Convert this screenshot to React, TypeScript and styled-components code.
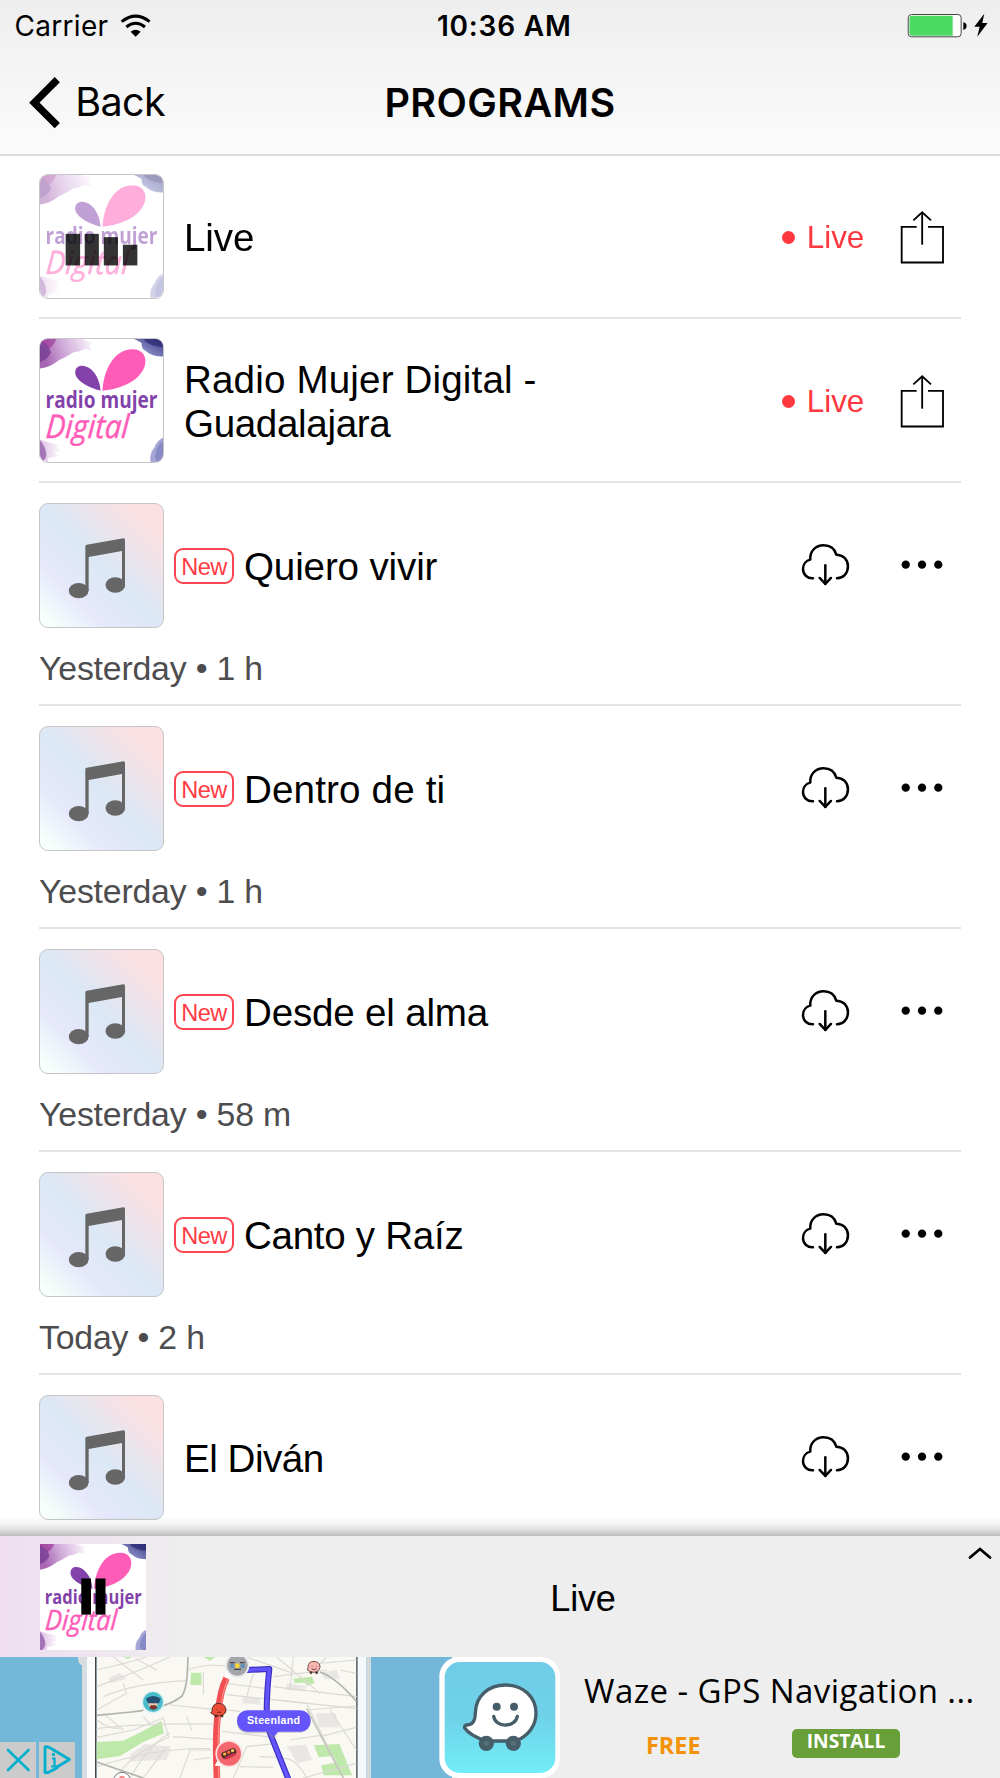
import React from "react";
import styled, { createGlobalStyle } from "styled-components";

const GlobalStyle = createGlobalStyle`
  * { box-sizing: border-box; }
  body { margin: 0; background: #fff; color: #000; }
  svg { display: block; flex: none; }
`;

const helvetica = `"Liberation Sans", Arial, sans-serif`;
const system = `Inter, "Liberation Sans", sans-serif`;
const openSans = `"Open Sans", "Noto Sans", sans-serif`;

const Screen = styled.div`
  width: 1000px;
  height: 1778px;
  display: flex;
  flex-direction: column;
  overflow: hidden;
  background: #fff;
  font-family: ${helvetica};
`;

/* ---------- header ---------- */

const Header = styled.header`
  height: 156px;
  flex: none;
  border-bottom: 2px solid #dadada;
  background: linear-gradient(#eeeeee, #fafafa 90%);
  font-family: ${system};
`;

const StatusBar = styled.div`
  height: 51px;
  display: grid;
  grid-template-columns: 1fr auto 1fr;
  align-items: center;
  padding: 0 11px 0 14.5px;
`;

const Carrier = styled.div`
  display: flex;
  align-items: center;
  gap: 12px;
  font-size: 28px;
  letter-spacing: 0.3px;
`;

const Clock = styled.div`
  font-size: 28px;
  font-weight: 600;
  letter-spacing: 0.8px;
  padding-left: 5px;
`;

const Power = styled.div`
  justify-self: end;
`;

const NavBar = styled.div`
  height: 103px;
  display: grid;
  grid-template-columns: 1fr auto 1fr;
  align-items: center;
  padding: 0 28px;
`;

const BackButton = styled.div`
  display: flex;
  align-items: center;
  gap: 12px;
  font-size: 39.5px;
  letter-spacing: -0.6px;
`;

const NavTitle = styled.h1`
  margin: 0;
  font-size: 39.5px;
  font-weight: 600;
  letter-spacing: 0.4px;
`;

/* ---------- list ---------- */

const List = styled.main`
  flex: 1;
  min-height: 0;
  overflow: hidden;
  padding: 0 39px;
`;

const Item = styled.article<{ $height: number; $top: number }>`
  height: ${(p) => p.$height}px;
  padding-top: ${(p) => p.$top}px;
  border-bottom: 2px solid #e3e3e3;
`;

const ItemMain = styled.div`
  height: 125px;
  display: flex;
  align-items: center;
  padding-right: 16px;
`;

const Thumb = styled.div<{ $music?: boolean }>`
  width: 125px;
  height: 125px;
  flex: none;
  border: 1px solid #c6c6c8;
  border-radius: 9px;
  overflow: hidden;
  background: ${(p) =>
    p.$music
      ? "linear-gradient(45deg, #f6fffa 6%, #e6e8fb 27%, #dbe8f5 50%, #fde0e1 88%)"
      : "#fff"};
`;

const Badge = styled.span`
  width: 60px;
  height: 36px;
  flex: none;
  margin: 1px 0 0 10px;
  border: 2px solid #ff4650;
  border-radius: 9px;
  color: #ff3b45;
  font-size: 23.6px;
  line-height: 34px;
  letter-spacing: -0.5px;
  text-align: center;
`;

const Title = styled.h2<{ $afterBadge?: boolean }>`
  flex: 1;
  margin: 0;
  padding: 3px 0 0 ${(p) => (p.$afterBadge ? 10 : 20)}px;
  font-size: 38.6px;
  font-weight: 400;
  line-height: 44.5px;
`;

const TitleLine = styled.span<{ $tracking: number }>`
  display: block;
  letter-spacing: ${(p) => p.$tracking}px;
  white-space: nowrap;
`;

const LiveTag = styled.span`
  display: flex;
  align-items: center;
  gap: 12px;
  margin-right: 36px;
  padding-top: 2px;
  color: #ff3840;
  font-size: 31.4px;
  line-height: 36px;
`;

const LiveDot = styled.i`
  width: 13px;
  height: 13px;
  border-radius: 50%;
  background: #ff3840;
`;

const Actions = styled.div`
  display: flex;
  align-items: center;
  gap: 50px;
  padding: 0 1px 2px 0;
`;

const Meta = styled.p`
  margin: 21px 0 0;
  color: #4d4d4f;
  font-size: 33.8px;
  line-height: 38px;
  letter-spacing: -0.18px;
`;

/* ---------- player ---------- */

const Player = styled.section`
  position: relative;
  height: 121px;
  flex: none;
  display: flex;
  justify-content: space-between;
  padding: 7.5px 8px 0 39.500px;
  background: linear-gradient(90deg, #efdff0 0, #efe2f0 60px, #eeeeee 185px);

  &::before {
    content: "";
    position: absolute;
    left: 0;
    right: 0;
    top: -20px;
    height: 20px;
    background: linear-gradient(
      rgba(0, 0, 0, 0),
      rgba(0, 0, 0, 0.04) 35%,
      rgba(0, 0, 0, 0.13) 70%,
      rgba(0, 0, 0, 0.27)
    );
  }
`;

const PlayerTitle = styled.div`
  flex: 1;
  padding: 34.5px 0 0 52px;
  font-size: 36.2px;
  line-height: 42px;
  letter-spacing: -0.2px;
  text-align: center;
`;

/* ---------- ad ---------- */

const Ad = styled.aside`
  position: relative;
  height: 121px;
  flex: none;
  display: flex;
  background: #eeeeee;
  font-family: ${openSans};
`;

const AppIcon = styled.div`
  margin-left: -13px;
  z-index: 1;
`;

const AdText = styled.div`
  flex: 1;
  padding-left: 24px;
`;

const AdTitle = styled.div`
  margin-top: 12px;
  font-size: 33px;
  line-height: 44px;
  letter-spacing: 0.42px;
  white-space: nowrap;
`;

const AdRow = styled.div`
  display: flex;
  align-items: center;
  margin-top: 14px;
  padding-left: 62px;
`;

const Price = styled.span`
  width: 146px;
  color: #f39208;
  font-size: 23.4px;
  font-weight: 700;
  line-height: 30px;
  padding-top: 3px;
`;

const Install = styled.span`
  width: 108px;
  height: 29px;
  border-radius: 5px;
  background: #689f38;
  color: #fff;
  font-size: 19.2px;
  font-weight: 700;
  line-height: 24px;
  text-align: center;
`;

const AdChoices = styled.div`
  position: absolute;
  left: 0;
  bottom: 0;
  display: flex;
  gap: 3px;
`;

/* ---------- drawings ---------- */

const WifiIcon = () => (
  <svg width="31.3" height="23.3" viewBox="360 36 94 70">
    <path d="M407 104 L392 89 Q407 77 422 89 Z" />
    <path d="M379 75 Q407 53 435 75" fill="none" stroke="#000" strokeWidth="9" />
    <path d="M365 59 Q407 26 449 59" fill="none" stroke="#000" strokeWidth="9" />
  </svg>
);

const BatteryIcon = () => (
  <svg width="82" height="25.3" viewBox="1222 36 246 76">
    <rect x="1225.500" y="40.500" width="159" height="67" rx="10" fill="#fff" stroke="#444" strokeWidth="3" />
    <path d="M1236 44 H1359 V104 H1236 Q1229 104 1229 97 V51 Q1229 44 1236 44 Z" fill="#4cd964" />
    <path d="M1391 64 Q1401 66 1401 75 Q1401 84 1391 87 Z" />
    <path d="M1454 38 L1424 77 H1440 L1433 107 L1464 66 H1448 Z" />
  </svg>
);

const BackChevron = () => (
  <svg width="35.3" height="53.3" viewBox="86 226 106 160">
    <path d="M174 237 L105 306 L174 375" fill="none" stroke="#000" strokeWidth="22" />
  </svg>
);

const ShareIcon = () => (
  <svg width="44.7" height="54" viewBox="480 148 134 162" fill="none" stroke="#000" strokeWidth="5.500">
    <path d="M530 198.500 H485 V305.500 H609 V198.500 H564" />
    <path d="M546.500 252 V155" />
    <path d="M520 179 L546.500 155 L573 179" />
  </svg>
);

const CloudDownloadIcon = () => (
  <svg
    width="49.3"
    height="43.3"
    viewBox="124 190 148 130"
    fill="none"
    stroke="#000"
    strokeWidth="7.500"
    strokeLinecap="round"
    strokeLinejoin="round"
  >
    <path d="M160 296 C142 297 130 284 130 268 C130 254 139 243 152 240 C150 214 168 197 192 197 C211 197 225 208 230 225 C250 225 265 240 265 260 C265 281 251 296 232 296" />
    <path d="M197 257 V313" />
    <path d="M180 295 L197 313 L214 295" />
  </svg>
);

const MoreIcon = () => (
  <svg width="44" height="9.300" viewBox="420 240 132 28">
    <circle cx="437" cy="254" r="12.500" />
    <circle cx="486" cy="254" r="12.500" />
    <circle cx="535" cy="254" r="12.500" />
  </svg>
);

const NoteIcon = () => (
  <svg width="123" height="123" viewBox="60 71 369 369" fill="#666">
    <ellipse cx="176" cy="331" rx="29.500" ry="23" />
    <ellipse cx="286" cy="314" rx="29.500" ry="23" />
    <path d="M196 198 Q196 194 200 193 L310 174 Q315 173 315 179 V315 H306 V212 L206 230 V332 H196 Z" />
  </svg>
);

const StationLogo = ({
  size,
  id,
  playing,
  paused,
}: {
  size: number;
  id: string;
  playing?: boolean;
  paused?: boolean;
}) => (
  <svg width={size} height={size} viewBox="58 56 374 374">
    <defs>
      <linearGradient id={`${id}-tl`} x1="0" y1="0.2" x2="1" y2="0">
        <stop offset="0" stopColor="#a765b3" />
        <stop offset="0.35" stopColor="#cba3d5" />
        <stop offset="0.75" stopColor="#ecdaf0" />
        <stop offset="1" stopColor="#fff" />
      </linearGradient>
      <linearGradient id={`${id}-tr`} x1="0" y1="1" x2="1" y2="0">
        <stop offset="0" stopColor="#a9b0dc" />
        <stop offset="1" stopColor="#3c3a8a" />
      </linearGradient>
      <linearGradient id={`${id}-bl`}>
        <stop offset="0" stopColor="#dfbfe4" />
        <stop offset="1" stopColor="#fff" />
      </linearGradient>
    </defs>
    <rect x="55" y="53" width="380" height="380" fill="#fff" />
    <g opacity={playing ? 0.5 : 1}>
      <path d="M58 56 H186 L222 68 L208 74 L216 92 L196 86 L176 94 L160 96 Q136 112 116 120 Q90 142 58 146 Z" fill={`url(#${id}-tl)`} />
      <path d="M58 60 Q86 72 91 96 Q86 114 58 127 Z" fill="#713a92" opacity="0.75" />
      <path d="M58 56 H108 Q96 82 84 84 Q74 68 58 66 Z" fill="#9a2f92" opacity="0.6" />
      <path d="M344 56 H432 V109 Q398 111 379 92 Q366 86 367 68 Q358 62 344 56 Z" fill={`url(#${id}-tr)`} />
      <path d="M376 56 H432 V80 Q400 80 376 62 Z" fill="#28246e" opacity="0.65" />
      <path d="M58 362 Q86 372 118 378 L108 386 L126 396 L100 400 L116 412 L84 418 L82 432 H58 Z" fill={`url(#${id}-bl)`} />
      <path d="M58 364 Q78 388 77 410 Q74 424 62 430 H58 Z" fill="#8d5aa8" opacity="0.75" />
      <path d="M432 356 Q412 366 406 386 Q390 404 394 430 H432 Z" fill="#a5a6d6" />
      <path d="M432 366 Q412 380 410 404 Q404 418 416 430 H432 Z" fill="#7a7fc0" opacity="0.7" />
      <path d="M242 213 C206 205 165 182 165 158 C165 132 194 132 213 148 C232 165 240 188 242 213 Z" fill="#8342aa" />
      <path d="M248 213 C250 160 278 87 340 87 C368 87 384 108 377 136 C365 182 302 210 248 213 Z" fill="#ff5cb8" />
      <text
        transform="translate(75 267) scale(0.84 1)"
        fontFamily='"Open Sans", sans-serif'
        fontWeight="700"
        fontSize="69"
        textLength="405"
        fill="#8342aa"
      >
        radio mujer
      </text>
      <text
        transform="translate(74 358) skewX(-4)"
        fontFamily='"Open Sans", sans-serif'
        fontStyle="italic"
        fontWeight="400"
        fontSize="99"
        textLength="252"
        lengthAdjust="spacingAndGlyphs"
        fill="#ff5cb8"
        stroke="#ff5cb8"
        strokeWidth="1.500"
      >
        Digital
      </text>
    </g>
    {playing && (
      <g fill="#000" opacity="0.8">
        <rect x="136" y="235" width="44" height="96" />
        <rect x="194" y="235" width="43" height="96" />
        <rect x="252" y="245" width="43" height="86" />
        <rect x="310" y="268" width="44" height="63" />
      </g>
    )}
    {paused && (
      <g>
        <rect x="203" y="177" width="34" height="127" />
        <rect x="253" y="177" width="35" height="127" />
      </g>
    )}
  </svg>
);

const ExpandIcon = () => (
  <svg width="24" height="16" viewBox="0 -2 24 16">
    <path d="M2 11.500 L12 3 L22 11.500" fill="none" stroke="#000" strokeWidth="2.800" strokeLinecap="round" />
  </svg>
);

const MapShot = () => (
  <svg width="452" height="121" viewBox="0 0 452 121">
    <rect width="452" height="121" fill="#74b8d9" />
    <g transform="translate(60 -7) scale(0.33333)">
      <path d="M54 0 H80 V400 H66 V46 Q54 42 54 20 Z" fill="#d9dde0" />
      <rect x="80" y="0" width="26" height="400" fill="#fcfcfd" />
      <rect x="105" y="0" width="5" height="400" fill="#444" />
      <rect x="110" y="0" width="779" height="400" fill="#f9f8f3" />
      <rect x="889" y="0" width="4" height="400" fill="#444" />
      <rect x="893" y="0" width="26" height="400" fill="#f4fafc" />
      <rect x="919" y="0" width="14" height="400" fill="#d2d9dd" />
      <g fill="#e9e7e3">
        <path d="M255 282 L332 290 L320 330 L208 334 L212 312 Z" />
        <path d="M680 100 L740 108 L732 124 L676 120 Z" />
        <path d="M768 190 H826 L838 232 H778 Z" />
        <path d="M680 288 L738 284 L756 330 L712 340 Z" />
        <path d="M145 84 L180 68 L200 88 L150 100 Z" />
        <path d="M548 140 L600 146 V164 L548 160 Z" />
        <path d="M780 66 L830 60 L840 88 H796 Z" />
      </g>
      <g fill="#bfe8ab">
        <path d="M110 276 L190 272 L248 244 L304 212 L312 250 L250 276 L180 318 L110 328 Z" />
        <path d="M393 68 H424 V105 H391 Z" />
        <path d="M762 286 L838 282 L876 376 H790 L784 346 L826 338 L822 318 L776 322 Z" />
        <path d="M700 86 L756 80 L764 98 L742 108 L734 98 L704 98 Z" />
        <path d="M430 21 H466 L450 32 Z" />
        <path d="M190 21 H215 L204 28 Z" />
      </g>
      <g fill="none" stroke="#dbdad4" strokeWidth="3.500">
        <path d="M110 60 Q200 40 260 21 M110 110 L240 60 L330 21 M130 140 Q220 100 380 92 M110 180 L200 130 L190 100" />
        <path d="M160 21 L250 90 M225 25 L290 60 M110 236 Q230 220 460 222 M110 262 L220 240 L310 204 L326 262 Q200 320 170 384" />
        <path d="M330 250 Q270 280 210 384 M110 350 Q300 290 450 296 M250 384 L320 290 M360 384 L390 300 L460 300" />
        <path d="M385 60 Q430 40 500 48 M430 66 V134 M330 165 L460 178 M380 200 L396 242 M340 260 L460 268" />
        <path d="M500 100 L620 116 M500 134 L890 176 M500 180 L540 184 M486 244 L640 262 M520 384 L560 290 L650 280" />
        <path d="M560 21 L700 70 M580 70 L560 140 M650 21 L780 130 M640 80 L800 60 M640 110 L890 140 M700 21 L690 120" />
        <path d="M800 21 L760 60 M780 40 L889 30 M840 60 L889 70 M650 150 L740 160 L850 384 M740 180 L889 168 M780 260 L889 232" />
        <path d="M690 270 L780 256 M660 330 Q700 310 740 384 M810 180 L889 300 M600 320 L660 322 M540 350 L640 352 M730 384 L889 340" />
        <path d="M110 210 Q150 240 180 234 M130 190 L190 240 M250 200 L270 222 M400 330 L450 322" />
      </g>
      <g fill="none" stroke="#b3b4ad" strokeWidth="5">
        <path d="M384 21 C382 76 382 110 366 138 C330 168 270 180 214 186 L110 196" />
        <path d="M780 66 Q830 84 889 154" />
        <path d="M110 336 L250 384" />
        <path d="M740 176 L850 384" stroke="#c6c6c0" />
      </g>
      <path d="M500 84 C484 112 478 150 474 190 C464 260 470 320 471 400" fill="none" stroke="#f14f52" strokeWidth="20" />
      <path d="M504 86 C490 116 484 150 480 190 C470 260 476 320 477 400" fill="none" stroke="#ff8a83" strokeWidth="4" />
      <path d="M560 60 L628 57 Q620 130 620 190 L628 244 L690 400" fill="none" stroke="#3a2fc0" strokeWidth="18" strokeLinejoin="round" />
      <path d="M560 60 L628 57 Q620 130 620 190 L628 244 L690 400" fill="none" stroke="#6355fb" strokeWidth="11" strokeLinejoin="round" />

      <path d="M494 84 L500 62 L526 82 Z" fill="#fff" />
      <circle cx="532" cy="47" r="36" fill="#e9e9e9" />
      <circle cx="532" cy="46" r="31" fill="#a3a5a8" />
      <circle cx="517" cy="48" r="7" fill="#5f8fb5" />
      <circle cx="548" cy="48" r="7" fill="#5f8fb5" />
      <circle cx="532" cy="47" r="7" fill="#ffd52e" />
      <path d="M510 38 H524 M540 38 H554 M522 58 H543" stroke="#444" strokeWidth="4" />

      <path d="M242 196 L256 172 L284 190 Z" fill="#f4f8f8" />
      <circle cx="279" cy="157" r="34" fill="#dff2f4" />
      <circle cx="279" cy="156" r="30" fill="#48bccb" />
      <circle cx="279" cy="161" r="14" fill="#f1c9b4" />
      <path d="M258 146 Q279 130 302 146 L297 160 H264 Z" fill="#234f73" />
      <path d="M268 174 Q280 184 292 174 L288 166 H272 Z" fill="#77372f" />

      <g stroke="#5b3028" strokeWidth="3">
        <path d="M456 184 Q456 160 477 160 Q498 162 498 182 Q494 198 476 198 Q462 198 452 188 Z" fill="#f04d38" />
        <circle cx="468" cy="198" r="3" />
        <circle cx="486" cy="198" r="3" />
        <path d="M470 178 V180 M486 178 V180 M472 188 Q478 184 484 188" fill="none" />
      </g>
      <g stroke="#70504c" strokeWidth="3">
        <path d="M744 52 Q744 34 762 34 Q781 36 780 52 Q777 67 761 67 Q750 66 742 60 Z" fill="#f8b6b1" />
        <circle cx="753" cy="68" r="3" />
        <circle cx="770" cy="68" r="3" />
        <path d="M756 48 V50 M769 48 V50 M755 56 Q762 62 770 56" fill="none" />
      </g>

      <path d="M464 348 L478 320 L510 346 Z" fill="#fff" />
      <circle cx="507" cy="311" r="41" fill="#fbe3e2" />
      <circle cx="507" cy="311" r="36" fill="#f4686d" />
      <g transform="rotate(-24 507 311)">
        <rect x="484" y="300" width="46" height="20" rx="8" fill="#4a2a2a" />
        <rect x="490" y="303" width="9" height="8" fill="#ffb13c" />
        <rect x="503" y="303" width="9" height="8" fill="#ff6a3c" />
        <rect x="516" y="303" width="9" height="8" fill="#ffd65c" />
        <rect x="490" y="315" width="34" height="9" rx="4" fill="#c8354a" />
      </g>

      <circle cx="186" cy="392" r="25" fill="#fff" stroke="#777" strokeWidth="3" />
      <circle cx="186" cy="386" r="9" fill="#f08b8b" />

      <path d="M556 190 H730 Q752 196 752 218 Q750 242 724 248 H654 L642 268 L622 250 H560 Q532 244 532 220 Z" fill="#888" opacity="0.4" />
      <rect x="531" y="181" width="221" height="64" rx="31" fill="#6355fb" />
      <path d="M622 244 L642 259 L656 244 Z" fill="#6355fb" />
      <text x="561" y="223" fontFamily='"Liberation Sans", sans-serif' fontWeight="700" fontSize="32" textLength="159" fill="#fff">
        Steenland
      </text>
    </g>
  </svg>
);

const WazeIcon = () => (
  <svg width="121" height="121" viewBox="9 9 363 363">
    <defs>
      <linearGradient id="waze-sky" x1="0" y1="0" x2="0" y2="1">
        <stop offset="0" stopColor="#70cce6" />
        <stop offset="0.5" stopColor="#6fd2e9" />
        <stop offset="1" stopColor="#72edf8" />
      </linearGradient>
    </defs>
    <rect x="10" y="9" width="362" height="363" rx="58" fill="#fff" />
    <rect x="26" y="24" width="332" height="333" rx="46" fill="url(#waze-sky)" />
    <path
      d="M150 261 C124 252 98 240 86 222 C84 212 92 213 100 212 C114 208 118 196 118 176 C120 126 158 93 208 93 C262 93 300 128 300 178 C300 216 276 246 240 261 Z"
      fill="#fff"
      stroke="#465e69"
      strokeWidth="10"
      strokeLinejoin="round"
    />
    <circle cx="151" cy="268" r="23" fill="#465e69" />
    <circle cx="232" cy="268" r="23" fill="#465e69" />
    <circle cx="151" cy="268" r="8" fill="#566e78" />
    <circle cx="232" cy="268" r="8" fill="#566e78" />
    <circle cx="182" cy="158" r="12" fill="#465e69" />
    <circle cx="234" cy="158" r="12" fill="#465e69" />
    <path d="M173 187 C178 222 238 222 244 187" fill="none" stroke="#465e69" strokeWidth="10" strokeLinecap="round" />
  </svg>
);

const AdClose = () => (
  <svg width="36" height="36" viewBox="0 0 36 36">
    <rect width="36" height="36" fill="#cbcbcb" />
    <path d="M8 8 L28.500 28 M28.500 8 L8 28" stroke="#00aecd" strokeWidth="2.600" strokeLinecap="round" />
  </svg>
);

const AdInfo = () => (
  <svg width="36" height="36" viewBox="0 0 36 36">
    <rect width="36" height="36" fill="#cbcbcb" />
    <path d="M9 30.500 L6 30.500 V5 Q9 4 13 7 L30.500 17.500 L18 25" fill="none" stroke="#00aecd" strokeWidth="2.800" strokeLinejoin="round" strokeLinecap="round" />
    <path d="M9 30.500 L18 26" stroke="#00aecd" strokeWidth="2.600" strokeLinecap="round" />
    <path d="M13 16.500 H15.500 V24.500 M12 24.500 H18" fill="none" stroke="#00aecd" strokeWidth="2.200" />
    <circle cx="14.500" cy="12.500" r="1.700" fill="#00aecd" />
  </svg>
);

/* ---------- data ---------- */

type Line = { text: string; tracking: number };

const stations: { id: string; lines: Line[]; playing: boolean; height: number; top: number }[] = [
  { id: "live", lines: [{ text: "Live", tracking: -0.1 }], playing: true, height: 163, top: 18 },
  {
    id: "gdl",
    lines: [
      { text: "Radio Mujer Digital -", tracking: 0.15 },
      { text: "Guadalajara", tracking: -0.35 },
    ],
    playing: false,
    height: 164,
    top: 19,
  },
];

const episodes = [
  { title: "Quiero vivir", tracking: -0.15, meta: "Yesterday • 1 h", isNew: true },
  { title: "Dentro de ti", tracking: 0.15, meta: "Yesterday • 1 h", isNew: true },
  { title: "Desde el alma", tracking: -0.2, meta: "Yesterday • 58 m", isNew: true },
  { title: "Canto y Raíz", tracking: -0.3, meta: "Today • 2 h", isNew: true },
  { title: "El Diván", tracking: -0.5, meta: "", isNew: false },
];

export default function App() {
  return (
    <Screen>
      <GlobalStyle />
      <Header>
        <StatusBar>
          <Carrier>
            Carrier
            <WifiIcon />
          </Carrier>
          <Clock>10:36 AM</Clock>
          <Power>
            <BatteryIcon />
          </Power>
        </StatusBar>
        <NavBar>
          <BackButton>
            <BackChevron />
            Back
          </BackButton>
          <NavTitle>PROGRAMS</NavTitle>
        </NavBar>
      </Header>

      <List>
        {stations.map((s) => (
          <Item key={s.id} $height={s.height} $top={s.top}>
            <ItemMain>
              <Thumb>
                <StationLogo size={123} id={s.id} playing={s.playing} />
              </Thumb>
              <Title>
                {s.lines.map((line) => (
                  <TitleLine key={line.text} $tracking={line.tracking}>
                    {line.text}
                  </TitleLine>
                ))}
              </Title>
              <LiveTag>
                <LiveDot />
                Live
              </LiveTag>
              <ShareIcon />
            </ItemMain>
          </Item>
        ))}
        {episodes.map((e) => (
          <Item key={e.title} $height={223} $top={20}>
            <ItemMain>
              <Thumb $music>
                <NoteIcon />
              </Thumb>
              {e.isNew && <Badge>New</Badge>}
              <Title $afterBadge={e.isNew}>
                <TitleLine $tracking={e.tracking}>{e.title}</TitleLine>
              </Title>
              <Actions>
                <CloudDownloadIcon />
                <MoreIcon />
              </Actions>
            </ItemMain>
            {e.meta && <Meta>{e.meta}</Meta>}
          </Item>
        ))}
      </List>

      <Player>
        <StationLogo size={106.5} id="player" paused />
        <PlayerTitle>Live</PlayerTitle>
        <ExpandIcon />
      </Player>

      <Ad>
        <MapShot />
        <AppIcon>
          <WazeIcon />
        </AppIcon>
        <AdText>
          <AdTitle>Waze - GPS Navigation ...</AdTitle>
          <AdRow>
            <Price>FREE</Price>
            <Install>INSTALL</Install>
          </AdRow>
        </AdText>
        <AdChoices>
          <AdClose />
          <AdInfo />
        </AdChoices>
      </Ad>
    </Screen>
  );
}
